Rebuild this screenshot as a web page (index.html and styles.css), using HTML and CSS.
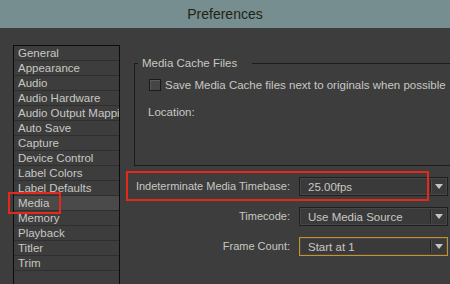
FILE: index.html
```html
<!DOCTYPE html>
<html>
<head>
<meta charset="utf-8">
<link rel="stylesheet" href="styles.css">
</head>
<body>
<div class="titlebar">Preferences</div>
<div class="main">
  <div class="sidebar">
    <ul class="list">
      <li>General</li>
      <li>Appearance</li>
      <li>Audio</li>
      <li>Audio Hardware</li>
      <li>Audio Output Mapping</li>
      <li>Auto Save</li>
      <li>Capture</li>
      <li>Device Control</li>
      <li>Label Colors</li>
      <li>Label Defaults</li>
      <li class="selected">Media</li>
      <li>Memory</li>
      <li>Playback</li>
      <li>Titler</li>
      <li>Trim</li>
    </ul>
    <div class="mark mark-media"></div>
  </div>
  <div class="content">
    <fieldset class="cache">
      <legend>Media Cache Files</legend>
      <div class="check"><span class="box"></span><span>Save Media Cache files next to originals when possible</span></div>
      <div class="location">Location:</div>
    </fieldset>
    <div class="settings">
      <div class="row">
        <span class="lbl">Indeterminate Media Timebase:</span>
        <div class="select"><span class="val">25.00fps</span><span class="btn"><span class="tri"></span></span></div>
      </div>
      <div class="row">
        <span class="lbl">Timecode:</span>
        <div class="select"><span class="val">Use Media Source</span><span class="btn"><span class="tri"></span></span></div>
      </div>
      <div class="row">
        <span class="lbl">Frame Count:</span>
        <div class="select focus"><span class="val">Start at 1</span><span class="btn"><span class="tri"></span></span></div>
      </div>
      <div class="mark mark-timebase"></div>
    </div>
  </div>
</div>
</body>
</html>
```
FILE: styles.css
```css
html, body {
  margin: 0;
  padding: 0;
}
body {
  width: 450px;
  height: 284px;
  overflow: hidden;
  background: #3d3d3d;
  font-family: "Liberation Sans", Arial, sans-serif;
  font-size: 11px;
  color: #c8c8c2;
}
.titlebar {
  height: 28px;
  background: #768e90;
  color: #1d2414;
  font-size: 14px;
  line-height: 28px;
  text-align: center;
}
.main {
  display: flex;
  height: 256px;
}
.sidebar {
  position: relative;
  margin-left: 13px;
  margin-top: 17px;
  width: 107px;
  box-sizing: border-box;
  border: 1px solid #0c0c0c;
  border-bottom: none;
  height: 239px;
}
.list {
  list-style: none;
  margin: 0;
  padding: 0;
  overflow: hidden;
}
.list li {
  height: 14px;
  line-height: 14px;
  border-bottom: 1px solid #2f2f2f;
  padding-left: 4px;
  white-space: nowrap;
  overflow: hidden;
  font-size: 11.5px;
}
.list li.selected {
  background: #4a4a4a;
}
.mark {
  position: absolute;
  border: 2px solid #e4281c;
  box-sizing: border-box;
}
.mark-media {
  left: -6px;
  top: 146px;
  width: 53px;
  height: 22px;
}
.content {
  margin-left: 14px;
  margin-top: 28px;
  flex: 1;
  min-width: 0;
}
.cache {
  margin: 0;
  padding: 0;
  width: 316px;
  height: 110px;
  box-sizing: border-box;
  border: 1px solid #1c1c1c;
  border-right: none;
  font-size: 11.5px;
}
.cache legend {
  margin-left: 3px;
  padding: 0 15px 0 4px;
  line-height: 14px;
}
.check {
  display: flex;
  align-items: center;
  margin-top: 8px;
  margin-left: 14px;
  height: 14px;
  white-space: nowrap;
}
.box {
  flex: none;
  width: 12px;
  height: 12px;
  box-sizing: border-box;
  border: 1px solid #1a1a1a;
  background: #454545;
  box-shadow: inset 1px 1px 0 #5a5a5a;
  margin-right: 4px;
}
.location {
  margin-top: 13px;
  margin-left: 13px;
  line-height: 14px;
}
.settings {
  position: relative;
  display: grid;
  grid-template-columns: 157px 149px;
  column-gap: 9px;
  row-gap: 11px;
  margin-left: -1px;
  margin-top: 11px;
}
.row {
  display: contents;
}
.lbl {
  text-align: right;
  line-height: 19px;
  white-space: nowrap;
}
.select {
  height: 19px;
  box-sizing: border-box;
  border: 1px solid #1f1f1f;
  background: #3a3a3a;
  box-shadow: inset 0 0 0 1px #474747;
  display: flex;
  align-items: center;
}
.select.focus {
  border-color: #c8902c;
}
.val {
  flex: 1;
  padding-left: 8px;
  white-space: nowrap;
  font-size: 11.5px;
}
.btn {
  width: 16px;
  height: 13px;
  border-left: 1px solid #222;
  box-shadow: inset 1px 0 0 #4c4c4c;
  display: flex;
  align-items: center;
  justify-content: center;
}
.tri {
  width: 0;
  height: 0;
  border-left: 4px solid transparent;
  border-right: 4px solid transparent;
  border-top: 5px solid #c4c4c4;
}
.mark-timebase {
  left: -7px;
  top: -6px;
  width: 303px;
  height: 30px;
}
```
